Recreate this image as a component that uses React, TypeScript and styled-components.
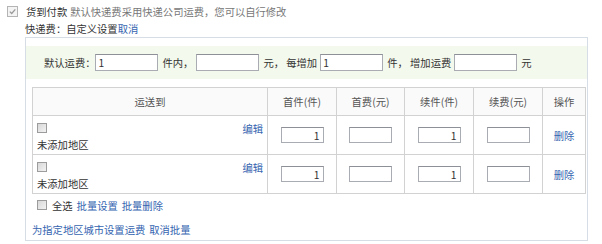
import React, { FC } from 'react'
import styled, { createGlobalStyle } from 'styled-components'

const GlobalStyle = createGlobalStyle`
  html, body {
    margin: 0;
    padding: 0;
    background: #fff;
  }
  body {
    font-family: "Noto Sans CJK SC", "Noto Sans", sans-serif;
    font-size: 10.3px;
    color: #333;
  }
`

const rows = [
    { id: 1, first: '1', firstFee: '', next: '1', nextFee: '' },
    { id: 2, first: '1', firstFee: '', next: '1', nextFee: '' },
]

const App: FC = () => {
    return (
        <>
            <GlobalStyle />
            <Page>
                <TopLine>
                    <TickBox>
                        <svg width="9" height="9" viewBox="0 0 9 9">
                            <path d="M1.8 4.6 L3.7 6.5 L7.3 2.4" fill="none" stroke="#9a9a9a" strokeWidth="1.3" />
                        </svg>
                    </TickBox>
                    <span>货到付款</span>
                    <Hint>默认快递费采用快递公司运费，您可以自行修改</Hint>
                </TopLine>
                <SubLine>
                    快递费：自定义设置<Link>取消</Link>
                </SubLine>

                <Panel>
                    <DefaultBand>
                        <span>默认运费：</span>
                        <FeeInput defaultValue="1" />
                        <BandText>件内，</BandText>
                        <FeeInput defaultValue="" />
                        <BandText>元，&nbsp;每增加</BandText>
                        <FeeInput defaultValue="1" />
                        <BandText>件，&nbsp;增加运费</BandText>
                        <FeeInput defaultValue="" />
                        <BandText>元</BandText>
                    </DefaultBand>

                    <Table>
                        <colgroup>
                            <col style={{ width: 235 }} />
                            <col style={{ width: 69 }} />
                            <col style={{ width: 68 }} />
                            <col style={{ width: 69 }} />
                            <col style={{ width: 69 }} />
                            <col style={{ width: 43 }} />
                        </colgroup>
                        <thead>
                            <tr>
                                <Th>运送到</Th>
                                <Th>首件(件)</Th>
                                <Th>首费(元)</Th>
                                <Th>续件(件)</Th>
                                <Th>续费(元)</Th>
                                <Th>操作</Th>
                            </tr>
                        </thead>
                        <tbody>
                            {rows.map(r => (
                                <Tr key={r.id}>
                                    <AreaCell>
                                        <AreaTop>
                                            <Box />
                                            <Link>编辑</Link>
                                        </AreaTop>
                                        <AreaName>未添加地区</AreaName>
                                    </AreaCell>
                                    <Td><CellInput defaultValue={r.first} /></Td>
                                    <Td><CellInput defaultValue={r.firstFee} /></Td>
                                    <Td><CellInput defaultValue={r.next} /></Td>
                                    <Td><CellInput defaultValue={r.nextFee} /></Td>
                                    <Td><Link>删除</Link></Td>
                                </Tr>
                            ))}
                        </tbody>
                    </Table>

                    <BatchLine>
                        <Box />
                        <span>全选</span>
                        <Link>批量设置</Link>
                        <Link>批量删除</Link>
                    </BatchLine>
                    <CityLine>
                        <Link>为指定地区城市设置运费</Link>
                        <Link>取消批量</Link>
                    </CityLine>
                </Panel>
            </Page>
        </>
    )
}

export default App

const Page = styled.div`
  width: 602px;
  height: 244px;
  overflow: hidden;
  padding-top: 3px;
  box-sizing: border-box;
`

const TopLine = styled.div`
  display: flex;
  align-items: center;
  height: 17px;
  padding-left: 7px;
`

const TickBox = styled.span`
  width: 9px;
  height: 9px;
  border: 1px solid #b4b4b4;
  background: #f4f4f4;
  margin-right: 8px;
  display: flex;
  box-sizing: content-box;
`

const Hint = styled.span`
  color: #777;
  margin-left: 3px;
`

const SubLine = styled.div`
  height: 17px;
  line-height: 17px;
  padding-left: 25px;
`

const Link = styled.a`
  color: #3565b0;
  cursor: pointer;
`

const Panel = styled.div`
  margin-left: 25px;
  width: 563px;
  height: 204px;
  box-sizing: border-box;
  border: 1px solid #d6dde5;
`

const DefaultBand = styled.div`
  margin-top: 8px;
  height: 33px;
  background: #f3f9ec;
  display: flex;
  align-items: center;
  padding-left: 18px;
`

const BandText = styled.span`
  margin: 0 3px 0 4px;
`

const FeeInput = styled.input`
  width: 63px;
  height: 17px;
  box-sizing: border-box;
  border: 1px solid #a9adb3;
  border-top-color: #8d9197;
  padding: 0 2px;
  font: inherit;
  color: #333;
  outline: none;
  background: #fff;
`

const Table = styled.table`
  margin: 8px 0 0 6px;
  width: 553px;
  table-layout: fixed;
  border-collapse: collapse;
`

const Th = styled.th`
  height: 27px;
  padding: 0;
  border: 1px solid #d2d2d2;
  background: #fafafa;
  font-weight: normal;
  color: #555;
  text-align: center;
`

const Tr = styled.tr`
  height: 39px;
`

const Td = styled.td`
  border: 1px solid #d2d2d2;
  padding: 0;
  text-align: center;
  vertical-align: middle;
`

const AreaCell = styled.td`
  border: 1px solid #d2d2d2;
  padding: 6px 4px 0 4px;
  vertical-align: top;
`

const AreaTop = styled.div`
  display: flex;
  justify-content: space-between;
  align-items: flex-start;
  height: 14px;
  line-height: 14px;
`

const AreaName = styled.div`
  line-height: 17px;
`

const Box = styled.span`
  display: inline-block;
  width: 8px;
  height: 8px;
  margin-top: 1px;
  border: 1px solid #9c9c9c;
  background: linear-gradient(135deg, #d8d8d8, #f2f2f2);
  box-sizing: content-box;
`

const CellInput = styled.input`
  width: 43px;
  height: 16px;
  box-sizing: border-box;
  border: 1px solid #a9adb3;
  border-top-color: #8d9197;
  padding: 0 3px;
  text-align: right;
  font: inherit;
  color: #333;
  outline: none;
  background: #fff;
`

const BatchLine = styled.div`
  display: flex;
  align-items: center;
  gap: 4px;
  height: 16px;
  margin-top: 3px;
  padding-left: 11px;
  & > span:first-child {
    margin-top: 0;
    margin-right: 1px;
  }
`

const CityLine = styled.div`
  display: flex;
  align-items: center;
  gap: 4px;
  height: 16px;
  margin-top: 8px;
  padding-left: 6px;
`
